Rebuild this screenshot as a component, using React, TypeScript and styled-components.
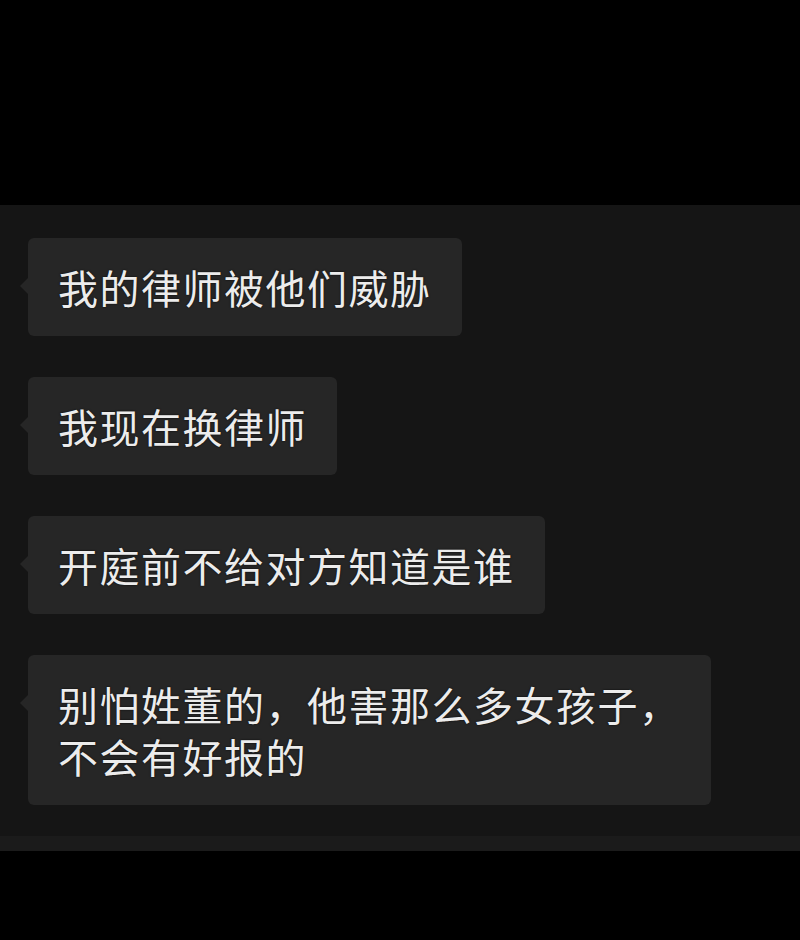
import React from "react";
import styled, { createGlobalStyle } from "styled-components";

const messages = [
  ["我的律师被他们威胁"],
  ["我现在换律师"],
  ["开庭前不给对方知道是谁"],
  ["别怕姓董的，他害那么多女孩子，", "不会有好报的"],
];

function App() {
  return (
    <Page>
      <GlobalStyle />
      <TopArea />
      <ChatPanel>
        <MessageList>
          {messages.map((lines, i) => (
            <Bubble key={i}>
              {lines.map((line, j) => (
                <Line key={j}>{line}</Line>
              ))}
            </Bubble>
          ))}
        </MessageList>
        <PanelFooter />
      </ChatPanel>
      <BottomArea />
    </Page>
  );
}

const GlobalStyle = createGlobalStyle`
  html, body {
    margin: 0;
    padding: 0;
    background: #000;
  }
`;

const Page = styled.div`
  width: 800px;
  height: 940px;
  background: #000;
  display: flex;
  flex-direction: column;
  overflow: hidden;
  font-family: "Noto Sans CJK SC", "Noto Sans", sans-serif;
`;

const TopArea = styled.div`
  height: 205px;
  flex-shrink: 0;
  background: #000;
`;

const ChatPanel = styled.div`
  background: #151515;
  display: flex;
  flex-direction: column;
  box-shadow: 0 -3px 6px rgba(0, 0, 0, 0.6);
`;

const MessageList = styled.div`
  display: flex;
  flex-direction: column;
  align-items: flex-start;
  gap: 41px;
  padding: 33px 0 31px 28px;
`;

const Bubble = styled.div`
  position: relative;
  background: #262626;
  border-radius: 6px;
  padding: 23px 30px;
  color: #ececec;
  font-size: 40px;
  line-height: 52px;
  letter-spacing: 1.5px;
  text-shadow: 0 0 2px rgba(0, 0, 0, 0.9);

  &::before {
    content: "";
    position: absolute;
    left: -8px;
    top: 40px;
    border-top: 8px solid transparent;
    border-bottom: 8px solid transparent;
    border-right: 8px solid #262626;
  }
`;

const Line = styled.div`
  white-space: nowrap;
`;

const PanelFooter = styled.div`
  height: 15px;
  background: #1b1b1b;
`;

const BottomArea = styled.div`
  flex: 1;
  background: #000;
`;

export default App;
